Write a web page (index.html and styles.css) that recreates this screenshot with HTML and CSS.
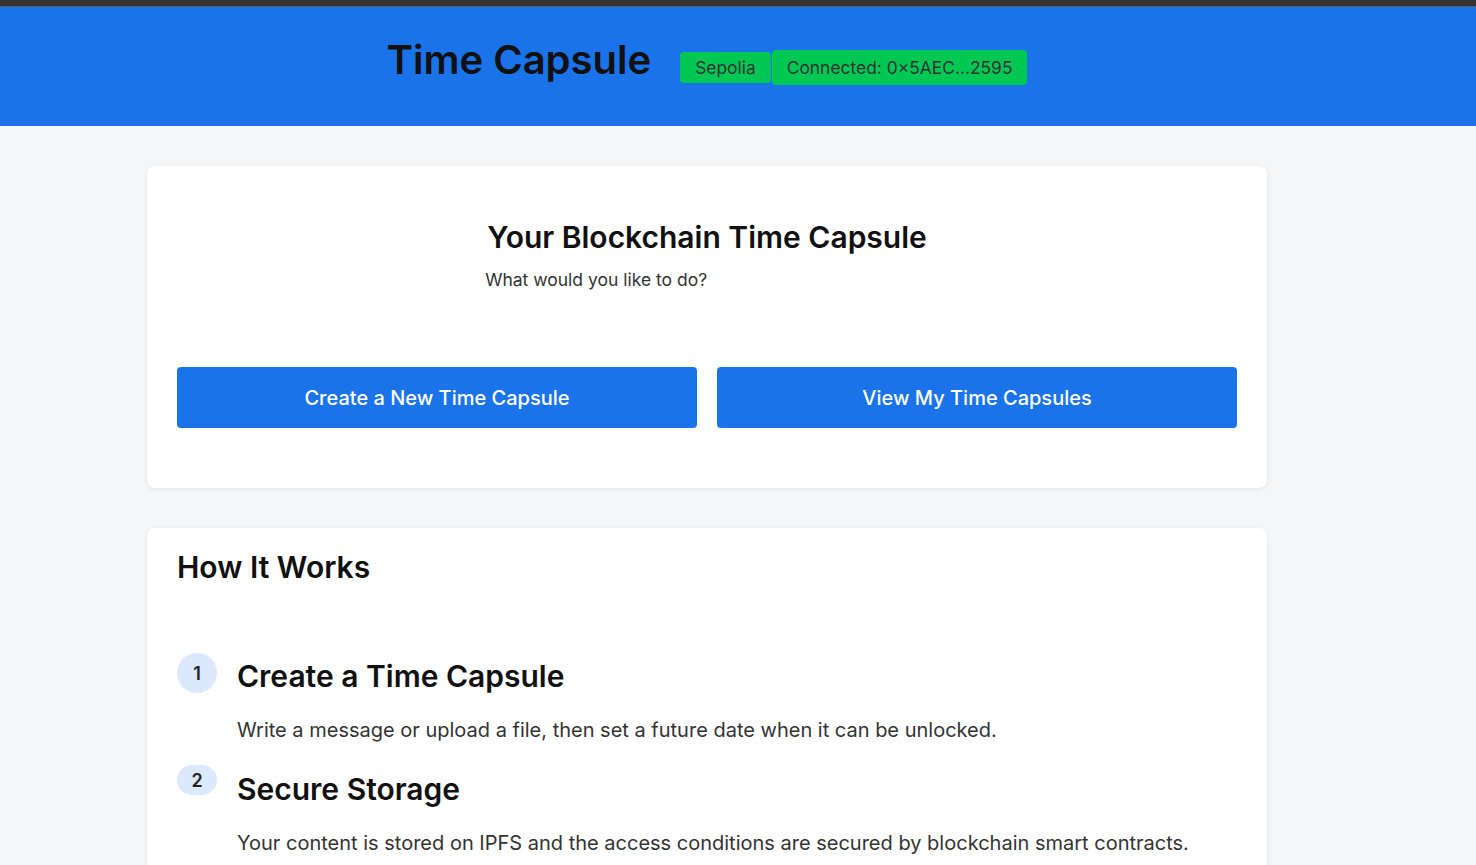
FILE: index.html
```html
<!DOCTYPE html>
<html lang="en">
<head>
<meta charset="utf-8">
<title>Time Capsule</title>
<link rel="stylesheet" href="styles.css">
</head>
<body>
<div class="topbar"></div>
<header class="header">
  <div class="header-inner">
    <h1 class="brand">Time Capsule</h1>
    <div class="badges">
      <span class="badge badge-net">Sepolia</span>
      <span class="badge badge-conn">Connected: 0×5AEC...2595</span>
    </div>
  </div>
</header>
<main class="main">
  <section class="card card-welcome">
    <div class="welcome-head">
      <h2 class="welcome-title">Your Blockchain Time Capsule</h2>
      <p class="welcome-sub">What would you like to do?</p>
    </div>
    <div class="actions">
      <button class="btn">Create a New Time Capsule</button>
      <button class="btn">View My Time Capsules</button>
    </div>
  </section>
  <section class="card card-how">
    <h2 class="how-title">How It Works</h2>
    <div class="steps">
      <div class="step">
        <span class="step-num">1</span>
        <h3 class="step-title">Create a Time Capsule</h3>
        <p class="step-desc">Write a message or upload a file, then set a future date when it can be unlocked.</p>
      </div>
      <div class="step step-short">
        <span class="step-num">2</span>
        <h3 class="step-title">Secure Storage</h3>
        <p class="step-desc">Your content is stored on IPFS and the access conditions are secured by blockchain smart contracts.</p>
      </div>
    </div>
  </section>
</main>
</body>
</html>
```

FILE: styles.css
```css
* { box-sizing: border-box; }
html, body { margin: 0; padding: 0; }
body {
  font-family: Inter, "Noto Sans", sans-serif;
  background: #f5f6f8;
  color: #111;
  overflow: hidden;
}
.topbar {
  height: 7px;
  background: #333333;
  border-bottom: 1px solid #5a5a5a;
}
.header {
  background: #1a73e8;
  height: 119px;
  padding: 28px 62px 0 0;
  display: flex;
  justify-content: center;
  align-items: flex-start;
}
.header-inner {
  display: flex;
  align-items: flex-start;
  gap: 29px;
}
.brand {
  margin: 0;
  font-size: 40px;
  font-weight: 600;
  color: #111;
}
.badges {
  display: flex;
  align-items: center;
  gap: 1px;
  margin-top: 15px;
}
.badge {
  background: #00c853;
  color: #333;
  font-size: 17.4px;
  border-radius: 4px;
  padding: 0 15px;
  display: flex;
  align-items: center;
}
.badge-net { height: 31px; }
.badge-conn { height: 35px; }
.main {
  width: 1120px;
  margin: 40px 0 0 147px;
  display: flex;
  flex-direction: column;
  gap: 40px;
}
.card {
  background: #fff;
  border-radius: 8px;
  box-shadow: 0 1px 4px rgba(0,0,0,0.08);
  padding: 30px;
}
.card-welcome { padding-bottom: 60px; }
.welcome-head {
  width: max-content;
  margin: 23px auto 0;
}
.welcome-title {
  margin: 0;
  font-size: 30px;
  font-weight: 600;
  color: #111;
}
.welcome-sub {
  margin: 14px 0 0 -2px;
  font-size: 17.5px;
  color: #333;
}
.actions {
  margin-top: 77px;
  display: grid;
  grid-template-columns: 1fr 1fr;
  gap: 20px;
}
.btn {
  height: 61px;
  border: 0;
  border-radius: 4px;
  background: #1a73e8;
  color: #fff;
  font-family: inherit;
  font-size: 20px;
  font-weight: 500;
}
.card-how { padding-top: 21px; min-height: 400px; }
.how-title {
  margin: 0;
  font-size: 30px;
  font-weight: 600;
  color: #111;
}
.steps {
  margin-top: 68px;
  display: flex;
  flex-direction: column;
  gap: 23px;
}
.step {
  display: grid;
  grid-template-columns: 40px 1fr;
  column-gap: 20px;
  align-items: start;
}
.step-num {
  width: 40px;
  height: 40px;
  border-radius: 20px;
  background: #dbe8fd;
  color: #222;
  font-weight: 600;
  font-size: 18px;
  display: flex;
  align-items: center;
  justify-content: center;
}
.step-short .step-num { height: 30px; }
.step-title {
  margin: 5px 0 0;
  font-size: 30px;
  font-weight: 600;
  color: #111;
}
.step-short .step-title { margin-top: 6px; }
.step-desc {
  grid-column: 2;
  margin: 24px 0 0;
  font-size: 20px;
  color: #333;
}
```
